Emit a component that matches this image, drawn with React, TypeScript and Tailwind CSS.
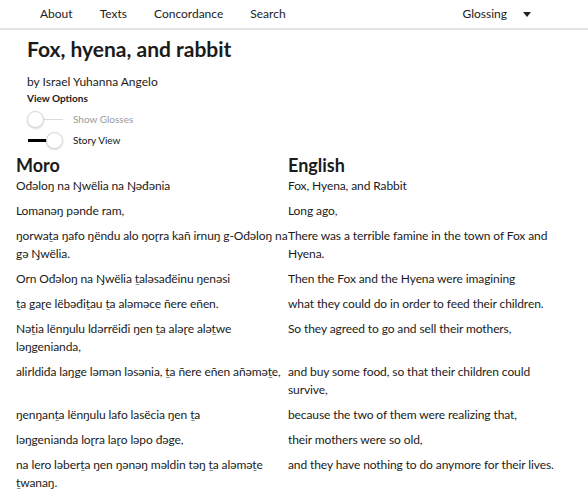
import React from "react";

const rows: [string, string][] = [
  ["Ođəloŋ na Ŋwëlia na Ŋəđənia", "Fox, Hyena, and Rabbit"],
  ["Lomanəŋ pənde ram,", "Long ago,"],
  [
    "ŋorwaṯa ŋafo ŋëndu alo ŋoɽra kañ irnuŋ g-Ođəloŋ na gə Ŋwëlia.",
    "There was a terrible famine in the town of Fox and Hyena.",
  ],
  ["Orn Ođəloŋ na Ŋwëlia ṯaləsađëinu ŋenəsi", "Then the Fox and the Hyena were imagining"],
  ["ṯa gaɽe lëbəđiṯau ṯa aləməce ñere eñen.", "what they could do in order to feed their children."],
  ["Nəṯia lënŋulu ldərrëiđi ŋen ṯa aləɽe aləṯwe ləŋgenianda,", "So they agreed to go and sell their mothers,"],
  [
    "alirldiđa laŋge ləmən ləsənia, ṯa ñere eñen añəməṯe,",
    "and buy some food, so that their children could survive,",
  ],
  ["ŋenŋanṯa lënŋulu lafo lasëcia ŋen ṯa", "because the two of them were realizing that,"],
  ["ləŋgenianda loɽra laɽo ləpo đəge,", "their mothers were so old,"],
  [
    "na lero ləberṯa ŋen ŋənəŋ məldin təŋ ṯa aləməṯe ṯwanaŋ.",
    "and they have nothing to do anymore for their lives.",
  ],
];

function Toggle({ on }: { on: boolean }) {
  return (
    <div className="relative w-[36px] h-[17px] flex items-center">
      {on ? (
        <div className="absolute left-[1px] w-[24px] h-[3px] bg-black" />
      ) : (
        <div className="absolute left-[14px] w-[22px] h-[1px] bg-[#dcdcdc]" />
      )}
      <div
        className={
          "absolute top-0 w-[17px] h-[17px] rounded-full bg-white border border-[#d4d4d4] shadow-[0_1px_2px_rgba(0,0,0,0.15)] " +
          (on ? "left-[19px]" : "left-0")
        }
      />
    </div>
  );
}

export default function App() {
  return (
    <div className="w-[588px] h-[500px] overflow-hidden bg-white text-[#1b1b1b] font-['Lato','Liberation_Sans',sans-serif]">
      {/* Nav */}
      <div className="h-[30px] border-b-2 border-[#e4e4e4] flex items-center text-[12px] text-[#222]">
        <div className="flex items-center pl-[40px] gap-[27px]">
          <span>About</span>
          <span>Texts</span>
          <span>Concordance</span>
          <span>Search</span>
        </div>
        <div className="ml-auto mr-[57px] flex items-center gap-[16px]">
          <span>Glossing</span>
          <span className="w-0 h-0 border-l-[4px] border-r-[4px] border-t-[5px] border-l-transparent border-r-transparent border-t-[#222]" />
        </div>
      </div>

      {/* Header */}
      <div className="pl-[27px]">
        <h1 className="text-[21px] font-bold leading-[28px] mt-[5px]">Fox, hyena, and rabbit</h1>
        <p className="text-[12px] leading-[16px] mt-[11px]">by Israel Yuhanna Angelo</p>
        <p className="text-[10px] font-bold leading-[14px] mt-[1px]">View Options</p>
        <div className="mt-[4px] flex items-center h-[21px]">
          <Toggle on={false} />
          <span className="ml-[10px] text-[10px] text-[#9a9a9a]">Show Glosses</span>
        </div>
        <div className="flex items-center h-[21px]">
          <Toggle on={true} />
          <span className="ml-[10px] text-[10px] text-[#111]">Story View</span>
        </div>
      </div>

      {/* Story */}
      <div className="pl-[16px] mt-[2px] grid grid-cols-[272px_272px] text-[12px] leading-[18px] tracking-[-0.1px]">
        <h2 className="text-[18px] font-bold leading-[24px] tracking-normal">Moro</h2>
        <h2 className="text-[18px] font-bold leading-[24px] tracking-normal">English</h2>
        {rows.map(([moro, eng], i) => (
          <React.Fragment key={i}>
            <div className="mb-[7px]">{moro}</div>
            <div className="mb-[7px]">{eng}</div>
          </React.Fragment>
        ))}
      </div>
    </div>
  );
}
